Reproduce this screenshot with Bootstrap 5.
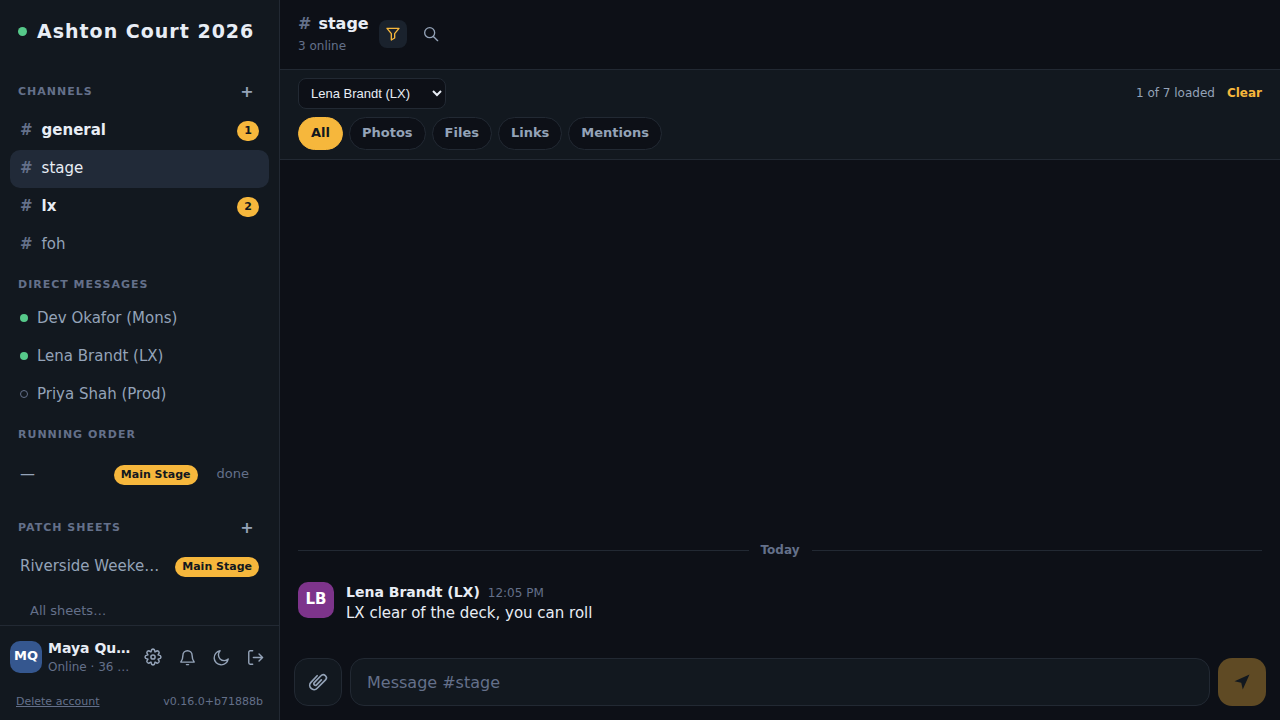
<!DOCTYPE html>
<html lang="en">
<head>
<meta charset="utf-8">
<meta name="viewport" content="width=device-width, initial-scale=1">
<title>Ashton Court 2026</title>
<link href="https://cdn.jsdelivr.net/npm/bootstrap@5.3.0/dist/css/bootstrap.min.css" rel="stylesheet">
<script src="https://cdn.jsdelivr.net/npm/bootstrap@5.3.0/dist/js/bootstrap.bundle.min.js" defer></script>
<style>
:root{--ink:#0d1017;--panel:#12181f;--raised:#1a222d;--active:#212a38;--line:#222933;--fg:#e8edf5;--soft:#94a3b8;--dim:#64708a;--amber:#f6b73c;--green:#56c98a}
body{background:var(--ink);color:var(--fg);font-family:"DejaVu Sans",sans-serif;font-size:15px;line-height:22px}
button{font-family:inherit}
svg{display:block;fill:none;stroke:currentColor;stroke-width:2;stroke-linecap:round;stroke-linejoin:round}
.sidebar{width:280px;background:var(--panel);border-right:1px solid var(--line)}
.brand{padding:16px 18px;font-size:19px;line-height:30px;letter-spacing:1px;gap:10px}
.dot{width:8px;height:8px;border-radius:50%;background:var(--green);flex:none}
.dot-lg{width:9px;height:9px}
.dot-off{background:none;border:1px solid var(--dim)}
.side-scroll{padding:0 10px;min-height:0}
.section-head{font-size:11px;line-height:16px;letter-spacing:1px;font-weight:700;color:var(--dim);text-transform:uppercase;padding:13px 8px 7px;margin:0}
.section-row{padding:19px 8px 9px}
.section-row .section-head{padding:0}
.section-row .plain{font-size:16px;line-height:22px;width:28px;font-weight:700}
.plain{background:none;border:0;padding:0;color:var(--soft);text-align:center}
.line-item{display:flex;align-items:center;height:38px;padding:0 10px 2px;border-radius:10px;color:var(--soft);text-decoration:none;white-space:nowrap;gap:9px}
.line-item.current{background:var(--active);color:var(--fg)}
.line-item.unread{color:var(--fg);font-weight:700}
.hash{color:var(--dim);font-weight:700}
.pill{background:var(--amber);color:#12181f;font-size:11px;line-height:20px;font-weight:700;border-radius:10px;padding:0 7px;min-width:22px;text-align:center;margin-top:2px;flex:none}
.set-list{padding:6px 0 4px}
.set-list .plain{padding:0 10px}
.all-sheets{padding:16px 20px 5px;text-decoration:none}
.avatar{display:flex;align-items:center;justify-content:center;width:36px;height:36px;border-radius:10px;background:#7d348b;color:#fff;font-weight:700;line-height:20px;padding-bottom:2px;flex:none}
.avatar-sm{width:32px;height:32px;background:#35578f;font-size:13px}
.account{border-top:1px solid var(--line)}
.me{padding:12px 7px 18px 10px;gap:6px}
.me-name{font-size:14px;line-height:20px}
.tiny{font-size:11px;line-height:16px;color:var(--dim)}
.tiny-row{padding:0 16px 10px}
.note{font-size:12px;line-height:18px;color:var(--dim)}
.note-lg{font-size:13px;line-height:18px;color:var(--dim)}
.icon-btn{width:34px;height:34px;display:flex;align-items:center;justify-content:center}
.head-btns{gap:10px}
.head-btn{width:28px;height:28px;border-radius:8px;display:flex;align-items:center;justify-content:center}
.head-btn.on{background:var(--raised);color:var(--amber)}
.chat-head{height:70px;padding:0 18px 2px;gap:10px;border-bottom:1px solid var(--line)}
.room{font-size:16px;line-height:24px;margin:0 0 1px}
.room .hash{margin-right:7px}
.filters{background:var(--panel);border-bottom:1px solid var(--line);padding:8px 18px 9px}
.who{width:148px;height:31px;border:1px solid var(--line);border-radius:8px;background:var(--ink);color:var(--fg);font:13px "Liberation Sans",sans-serif;padding:0 0 0 8px}
.loaded{gap:12px;padding-bottom:2px}
.loaded .note{color:var(--soft)}
.loaded .clear-link{color:var(--amber);font-weight:700}
.chips{gap:6px;margin-top:8px}
.chip{height:33px;border:1px solid var(--line);border-radius:17px;background:var(--ink);color:var(--soft);font-size:13px;line-height:18px;font-weight:700;padding:0 12px 2px}
.chip.on{background:var(--amber);border-color:var(--amber);color:#12181f}
.feed{padding:0 18px 34px}
.rule{height:1px;background:var(--line)}
.day{gap:12px;margin-bottom:23px}
.post{gap:12px}
.post-by{font-size:14px;line-height:20px}
.composer{padding:0 14px 14px}
.tool{width:48px;height:48px;border-radius:14px;border:1px solid var(--line);background:var(--panel);color:var(--soft);display:flex;align-items:center;justify-content:center;flex:none;padding:0}
.tool.send{background:#5f4a24;border:0;color:#12181f}
.entry{height:48px;border-radius:14px;border:1px solid var(--line);background:var(--panel);color:var(--fg);padding:0 16px;font-size:16px;min-width:0}
.entry::placeholder{color:var(--dim)}
</style>
</head>
<body>
<div class="d-flex vh-100 overflow-hidden">
  <aside class="sidebar d-flex flex-column flex-shrink-0">
    <h1 class="brand d-flex align-items-center fw-bold m-0"><span class="dot dot-lg"></span>Ashton Court 2026</h1>
    <nav class="side-scroll flex-grow-1 overflow-hidden" aria-label="Workspace">
      <div class="section-row d-flex align-items-center justify-content-between">
        <h2 class="section-head">Channels</h2><button class="plain" aria-label="Add channel">+</button>
      </div>
      <a class="line-item unread" href="#general"><span class="hash">#</span><span class="flex-grow-1">general</span><span class="pill">1</span></a>
      <a class="line-item current" href="#stage" aria-current="page"><span class="hash">#</span>stage</a>
      <a class="line-item unread" href="#lx"><span class="hash">#</span><span class="flex-grow-1">lx</span><span class="pill">2</span></a>
      <a class="line-item" href="#foh"><span class="hash">#</span>foh</a>
      <h2 class="section-head">Direct messages</h2>
      <a class="line-item" href="#dev"><span class="dot"></span>Dev Okafor (Mons)</a>
      <a class="line-item" href="#lena"><span class="dot"></span>Lena Brandt (LX)</a>
      <a class="line-item" href="#priya"><span class="dot dot-off"></span>Priya Shah (Prod)</a>
      <h2 class="section-head">Running order</h2>
      <div class="set-list">
        <div class="line-item"><span class="flex-grow-1">—</span><span class="pill">Main Stage</span><button class="plain note-lg">done</button></div>
      </div>
      <div class="section-row d-flex align-items-center justify-content-between">
        <h2 class="section-head">Patch sheets</h2><button class="plain" aria-label="Add patch sheet">+</button>
      </div>
      <a class="line-item" href="#riverside"><span class="flex-grow-1">Riverside Weeke…</span><span class="pill">Main Stage</span></a>
      <a class="all-sheets note-lg d-block" href="#sheets">All sheets…</a>
    </nav>
    <div class="account">
      <div class="me d-flex align-items-center">
        <span class="avatar avatar-sm">MQ</span>
        <div class="flex-grow-1 text-nowrap">
          <div class="me-name fw-bold">Maya Qu…</div>
          <div class="note">Online · 36 …</div>
        </div>
        <div class="d-flex flex-shrink-0">
          <button class="plain icon-btn" aria-label="Settings"><svg width="18" height="18" viewBox="0 0 24 24" stroke-width="1.8"><path d="M10.200 2.200 Q12 .8 13.800 2.200 L14.800 5.200 L17.700 3.700 Q20 4 20.300 6.300 L18.800 9.200 L21.800 10.200 Q23.200 12 21.800 13.800 L18.800 14.800 L20.300 17.700 Q20 20 17.700 20.300 L14.800 18.800 L13.800 21.800 Q12 23.200 10.200 21.800 L9.200 18.800 L6.300 20.300 Q4 20 3.700 17.700 L5.200 14.800 L2.200 13.800 Q.8 12 2.200 10.200 L5.200 9.200 L3.700 6.300 Q4 4 6.300 3.700 L9.200 5.200 Z"/><circle cx="12" cy="12" r="2.800"/></svg></button>
          <button class="plain icon-btn" aria-label="Notifications"><svg width="17" height="17" viewBox="0 0 24 24"><path d="M18.500 9a6.500 6.500 0 0 0-13 0c0 6-3 9-3 9.500h19c0-.5-3-3.500-3-9.500M10.500 22h3"/></svg></button>
          <button class="plain icon-btn" aria-label="Dark theme"><svg width="17" height="17" viewBox="0 0 24 24"><path d="M21.500 14A10 10 0 1 1 10 2.500 8 8 0 0 0 21.500 14z"/></svg></button>
          <button class="plain icon-btn" aria-label="Sign out"><svg width="17" height="17" viewBox="0 0 24 24"><path d="M8 2.500H4.500a2 2 0 0 0-2 2v15a2 2 0 0 0 2 2H8M9 12h13M17 7l5 5-5 5"/></svg></button>
        </div>
      </div>
      <div class="tiny-row d-flex justify-content-between">
        <button class="plain tiny text-decoration-underline">Delete account</button>
        <span class="tiny">v0.16.0+b71888b</span>
      </div>
    </div>
  </aside>

  <main class="d-flex flex-column flex-grow-1 overflow-hidden">
    <header class="chat-head d-flex align-items-center flex-shrink-0">
      <div>
        <h2 class="room fw-bold"><span class="hash">#</span>stage</h2>
        <div class="note">3 online</div>
      </div>
      <div class="head-btns d-flex">
        <button class="plain head-btn on" aria-label="Filter" aria-pressed="true"><svg width="16" height="16" viewBox="0 0 24 24" stroke-width="2.400"><path d="M3 3.500h18L14.500 11.500v6.500l-5 3V11.500z"/></svg></button>
        <button class="plain head-btn" aria-label="Search"><svg width="16" height="16" viewBox="0 0 24 24" stroke-width="2.400"><circle cx="10" cy="10" r="7.500"/><path d="m16 16 6 6"/></svg></button>
      </div>
    </header>
    <section class="filters flex-shrink-0" aria-label="Message filters">
      <div class="d-flex align-items-center justify-content-between">
        <select class="who" aria-label="From"><option>Lena Brandt (LX)</option><option>Dev Okafor (Mons)</option></select>
        <div class="loaded d-flex align-items-center">
          <span class="note">1 of 7 loaded</span>
          <button class="plain note clear-link">Clear</button>
        </div>
      </div>
      <div class="chips d-flex flex-wrap">
        <button class="chip on" aria-pressed="true">All</button>
        <button class="chip">Photos</button>
        <button class="chip">Files</button>
        <button class="chip">Links</button>
        <button class="chip">Mentions</button>
      </div>
    </section>
    <section class="feed flex-grow-1 d-flex flex-column justify-content-end overflow-hidden" aria-label="Messages">
      <div class="day d-flex align-items-center"><div class="rule flex-grow-1"></div><span class="note fw-bold">Today</span><div class="rule flex-grow-1"></div></div>
      <article class="post d-flex">
        <span class="avatar">LB</span>
        <div>
          <div class="post-by d-flex align-items-baseline gap-2"><strong>Lena Brandt (LX)</strong><time class="note">12:05 PM</time></div>
          <div>LX clear of the deck, you can roll</div>
        </div>
      </article>
    </section>
    <form class="composer d-flex gap-2 flex-shrink-0">
      <button type="button" class="tool" aria-label="Attach file"><svg width="20" height="20" viewBox="0 0 24 24" stroke-width="1.800"><path d="M11 4.500 3.500 12.500a5 5 0 0 0 7.500 7L21 9.500a3.700 3.700 0 0 0-5.500-5L7.500 12.800a1.900 1.900 0 0 0 2.800 2.600L16 9.500"/></svg></button>
      <input class="entry flex-grow-1" type="text" placeholder="Message #stage" aria-label="Message #stage">
      <button type="button" class="tool send" aria-label="Send"><svg width="18" height="18" viewBox="0 0 24 24"><path fill="currentColor" stroke="none" d="M22 2 13 22l-2-9-9-2z"/></svg></button>
    </form>
  </main>
</div>
</body>
</html>
